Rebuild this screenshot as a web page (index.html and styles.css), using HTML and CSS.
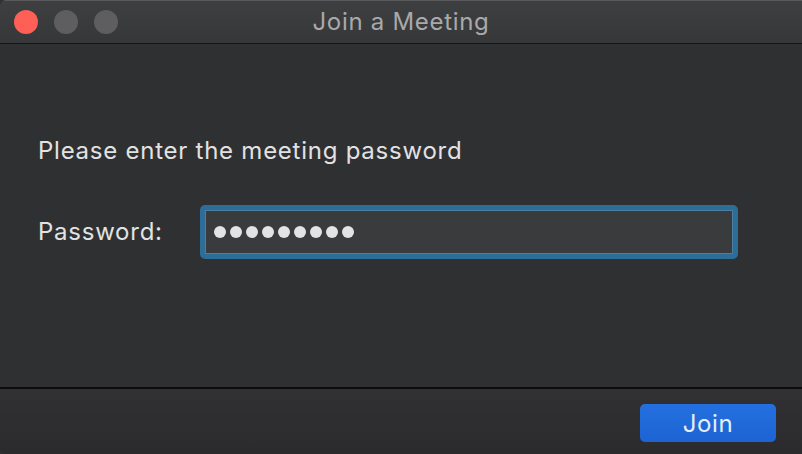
FILE: index.html
```html
<!DOCTYPE html>
<html lang="en">
<head>
<meta charset="utf-8">
<title>Join a Meeting</title>
<link rel="stylesheet" href="styles.css">
</head>
<body>
<div class="window">
  <header class="titlebar">
    <div class="lights">
      <span class="light close"></span>
      <span class="light idle"></span>
      <span class="light idle"></span>
    </div>
    <div class="title">Join a Meeting</div>
  </header>
  <main class="content">
    <p class="prompt">Please enter the meeting password</p>
    <div class="row">
      <label class="label" for="pw">Password:</label>
      <div class="field" id="pw">
        <span class="dot"></span><span class="dot"></span><span class="dot"></span>
        <span class="dot"></span><span class="dot"></span><span class="dot"></span>
        <span class="dot"></span><span class="dot"></span><span class="dot"></span>
      </div>
    </div>
  </main>
  <footer class="footer">
    <button class="join">Join</button>
  </footer>
</div>
</body>
</html>
```
FILE: styles.css
```css
* { box-sizing: border-box; }
html, body { margin: 0; padding: 0; background: #2f3032; }
body { font-family: Inter, "Noto Sans", sans-serif; }

.window {
  width: 802px;
  height: 454px;
  display: flex;
  flex-direction: column;
  background: #2f3032;
  border-radius: 6px 0 0 6px;
  overflow: hidden;
}

.titlebar {
  position: relative;
  height: 44px;
  flex: none;
  background: linear-gradient(#3e3f41, #363739);
  border-top: 1px solid #5a5a5c;
  border-bottom: 1px solid #141414;
  display: flex;
  align-items: center;
  justify-content: center;
}
.lights {
  position: absolute;
  left: 14px;
  top: 9px;
  display: flex;
  gap: 16px;
}
.light {
  width: 24px;
  height: 24px;
  border-radius: 50%;
  background: #5e5e60;
}
.light.close { background: #fe5f57; }
.title {
  color: #a9a9aa;
  font-size: 24px;
  letter-spacing: 0.7px;
  margin-top: -1px;
}

.content {
  flex: 1;
  padding: 91px 0 0 38px;
  background: #2f3032;
}
.prompt {
  margin: 0;
  color: #e2e2e3;
  font-size: 24px;
  letter-spacing: 0.75px;
  line-height: 32px;
}
.row {
  display: flex;
  align-items: center;
  margin-top: 38px;
}
.label {
  width: 162px;
  color: #e2e2e3;
  font-size: 24px;
  letter-spacing: 0.75px;
  line-height: 32px;
}
.field {
  width: 538px;
  height: 54px;
  border: 5px solid #2d6d98;
  border-radius: 5px;
  background: #3a3b3d;
  box-shadow: inset 0 0 0 1px #4a7fa3;
  display: flex;
  align-items: center;
  gap: 4px;
  padding-left: 9px;
}
.dot {
  width: 12px;
  height: 12px;
  border-radius: 50%;
  background: #e3e3e3;
}

.footer {
  flex: none;
  height: 67px;
  border-top: 2px solid #0c0c0c;
  background: linear-gradient(#313133, #2b2b2d);
  display: flex;
  justify-content: flex-end;
  align-items: flex-start;
  padding: 15px 26px 0 0;
}
.join {
  width: 136px;
  height: 38px;
  border: none;
  border-radius: 5px;
  background: linear-gradient(#2470e0, #1d63d3);
  color: #e6eefb;
  font-family: Inter, "Noto Sans", sans-serif;
  font-size: 24px;
  letter-spacing: 0.6px;
  padding: 0;
}
```
